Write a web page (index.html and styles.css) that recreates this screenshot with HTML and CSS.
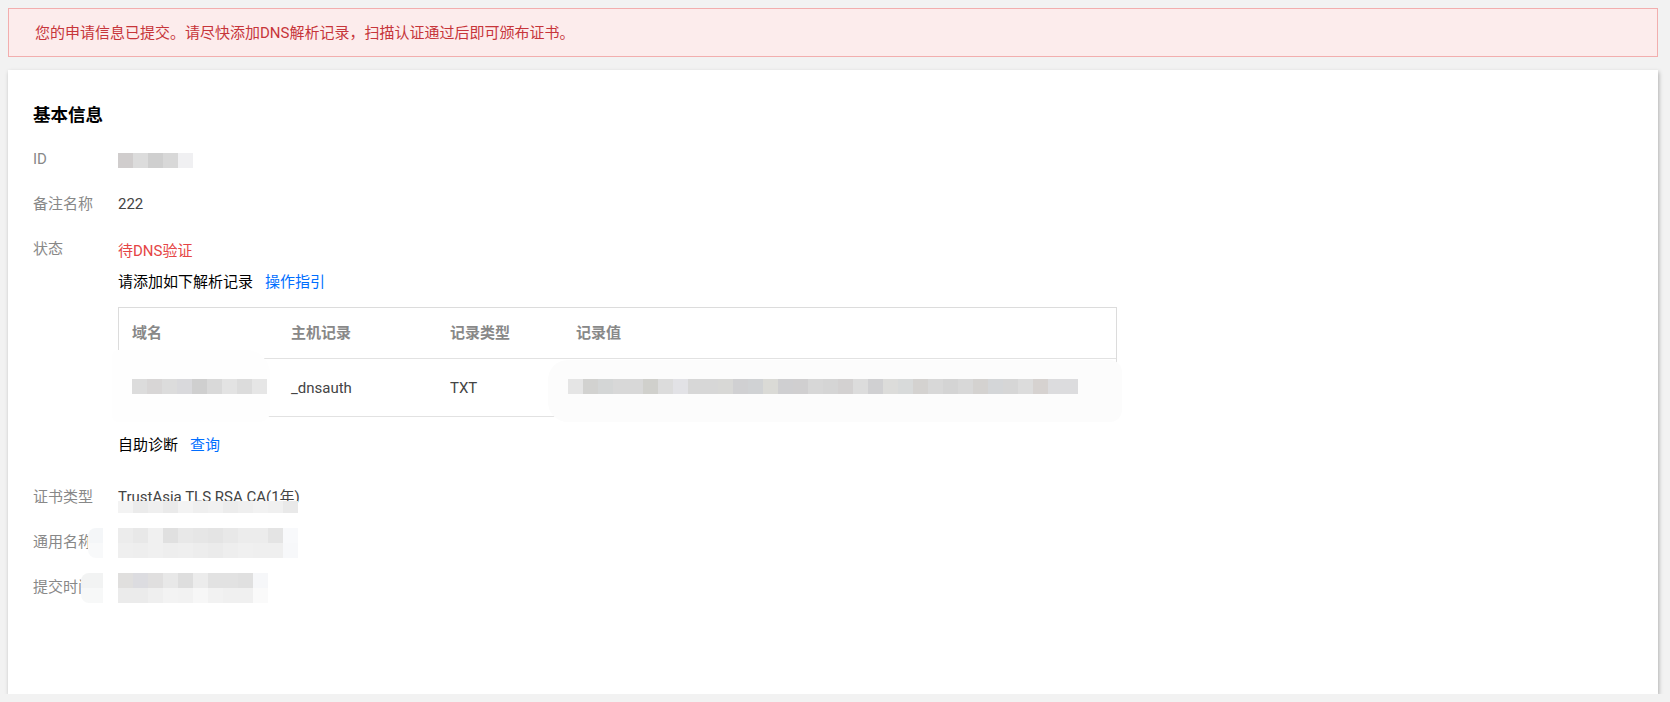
FILE: index.html
```html
<!DOCTYPE html>
<html lang="zh-CN">
<head>
    <meta charset="UTF-8">
    <title>证书详情</title>
    <link rel="stylesheet" href="styles.css">
</head>
<body>
    <div class="page">
        <div class="alert">您的申请信息已提交。请尽快添加DNS解析记录，扫描认证通过后即可颁布证书。</div>

        <div class="card">
            <h3>基本信息</h3>

            <div class="info-row">
                <span class="label">ID</span>
                <div class="value"><span class="mosaic mosaic-id"></span></div>
            </div>

            <div class="info-row">
                <span class="label">备注名称</span>
                <div class="value">222</div>
            </div>

            <div class="info-row status-row">
                <span class="label">状态</span>
                <div class="value">
                    <div class="status">待DNS验证</div>
                    <div class="dns-tip">请添加如下解析记录<a href="#" class="link">操作指引</a></div>

                    <div class="record-table">
                        <table>
                            <colgroup>
                                <col style="width: 159px">
                                <col style="width: 159px">
                                <col style="width: 126px">
                                <col>
                            </colgroup>
                            <thead>
                                <tr>
                                    <th>域名</th>
                                    <th>主机记录</th>
                                    <th>记录类型</th>
                                    <th>记录值</th>
                                </tr>
                            </thead>
                            <tbody>
                                <tr>
                                    <td><span class="mosaic mosaic-domain"></span></td>
                                    <td>_dnsauth</td>
                                    <td>TXT</td>
                                    <td><span class="mosaic mosaic-record"></span></td>
                                </tr>
                            </tbody>
                        </table>
                        <div class="smudge smudge-left"></div>
                        <div class="smudge smudge-right"></div>
                    </div>

                    <div class="diagnose">自助诊断<a href="#" class="link">查询</a></div>
                </div>
            </div>

            <div class="info-row">
                <span class="label">证书类型</span>
                <div class="value cert-type">
                    TrustAsia TLS RSA CA(1年)
                    <span class="mosaic mosaic-cert"></span>
                </div>
            </div>

            <div class="info-row">
                <span class="label">通用名称<span class="smudge smudge-label-a"></span></span>
                <div class="value"><span class="mosaic mosaic-cn"></span></div>
            </div>

            <div class="info-row">
                <span class="label">提交时间<span class="smudge smudge-label-b"></span></span>
                <div class="value"><span class="mosaic mosaic-time"></span></div>
            </div>
        </div>
    </div>
</body>
</html>
```

FILE: styles.css
```css
/* base */
body {
    margin: 0;
    background-color: #f2f2f2;
    font-family: Roboto, "Noto Sans CJK SC", sans-serif;
    font-size: 15px;
    color: #333;
}

.page {
    padding: 8px 12px 0 8px;
}

/* top notice */
.alert {
    border: 1px solid #f2aeae;
    background-color: #fcecec;
    color: #c7353a;
    line-height: 20px;
    padding: 14px 26px 13px;
}

/* card */
.card {
    margin-top: 13px;
    background-color: #fff;
    padding: 33px 25px 97px;
    box-shadow: 1px 2px 4px rgba(0, 0, 0, 0.28);
}
.card h3 {
    margin: 0 0 22px;
    font-size: 17.5px;
    line-height: 24px;
    font-weight: bold;
    color: #000;
}

.info-row {
    display: flex;
    line-height: 20px;
    margin-bottom: 25px;
}
.info-row:last-child {
    margin-bottom: 0;
}
.status-row {
    margin-bottom: 32px;
}
.label {
    position: relative;
    width: 85px;
    flex-shrink: 0;
    color: #888;
}
.value {
    position: relative;
    flex: 1;
    color: #444;
}

.status {
    padding-top: 2px;
    color: #e54545;
}
.dns-tip,
.diagnose {
    color: #000;
}
.dns-tip {
    margin-top: 11px;
}
.diagnose {
    margin-top: 18px;
}
.link {
    margin-left: 12px;
    color: #006eff;
    text-decoration: none;
}

/* dns record table */
.record-table {
    position: relative;
    width: 999px;
    box-sizing: border-box;
    margin-top: 15px;
    border: 1px solid #dcdcdc;
    border-bottom: none;
}
.record-table table {
    width: 100%;
    table-layout: fixed;
    border-collapse: separate;
    border-spacing: 0;
}
.record-table th {
    height: 50px;
    padding: 0 13px;
    text-align: left;
    font-weight: bold;
    color: #888;
    border-bottom: 1px solid #e2e2e2;
}
.record-table td {
    height: 57px;
    padding: 0 13px;
    color: #444;
    white-space: nowrap;
    border-bottom: 1px solid #e2e2e2;
}

/* redacted bits */
.mosaic {
    position: relative;
    z-index: 2;
    display: block;
}
.mosaic-id {
    width: 75px;
    height: 15px;
    margin-top: 4px;
    background: linear-gradient(to right, #d0cdcd 0 15px, #dcdcdc 15px 30px, #cfcfcf 30px 45px, #d8d8d8 45px 60px, #f0f0f2 60px 75px);
}
.mosaic-domain {
    width: 135px;
    height: 15px;
    margin-top: -2px;
    background: linear-gradient(to right, #dcdcdc 0 15px, #d8d6d6 15px 30px, #dcdcdc 30px 45px, #d9d9dc 45px 60px, #cfcfcf 60px 75px, #d9d9d9 75px 90px, #e3e3e3 90px 105px, #dcdcdc 105px 120px, #e6e6e6 120px 135px);
}
.mosaic-record {
    width: 510px;
    height: 15px;
    margin-left: -8px;
    margin-top: -2px;
    background: linear-gradient(to right,
        #e5e5e5 0 15px, #d2d2d0 15px 30px, #d4d6d6 30px 45px, #d8d8d8 45px 75px,
        #d0d0cc 75px 90px, #dcdcdc 90px 105px, #e2e2e6 105px 120px, #d7d7d7 120px 150px,
        #d8d8d6 150px 165px, #d0d0d2 165px 180px, #d0d2d4 180px 195px, #dadad6 195px 210px,
        #cfcfd1 210px 225px, #d0cfd0 225px 240px, #d7d7d7 240px 255px, #d5d5d5 255px 270px,
        #d3d1d1 270px 285px, #dcdcdc 285px 300px, #d0d0d2 300px 315px, #dcdcda 315px 330px,
        #d8dada 330px 345px, #d4d2d0 345px 360px, #d8d8d8 360px 375px, #d4d4d4 375px 390px,
        #d8d8d8 390px 405px, #d4d2d0 405px 420px, #d4d6d8 420px 435px, #d6d6d6 435px 450px,
        #dcdcdc 450px 465px, #d6d2d0 465px 480px, #dcdcde 480px 495px, #dcdcde 495px 510px);
}
.cert-type .mosaic-cert {
    position: absolute;
    left: 0;
    top: 14px;
    width: 180px;
    height: 12px;
    background: linear-gradient(to right,
        #f3f3f3 0 15px, #ebebeb 15px 30px, #efefef 30px 45px, #eaeaea 45px 60px,
        #f3f3f3 60px 75px, #efefef 75px 90px, #f1f1f1 90px 105px, #ececec 105px 120px,
        #efefef 120px 135px, #f2f2f2 135px 150px, #f0f0f0 150px 165px, #e9e9e9 165px 180px);
}
.mosaic-cn {
    width: 180px;
    height: 30px;
    margin: -4px 0 -6px;
    background:
        linear-gradient(to right,
            #ececec 0 15px, #e8e8e8 15px 30px, #f0f0f0 30px 45px, #e0e0e0 45px 60px,
            #e8e8e8 60px 75px, #e6e6e6 75px 90px, #e4e4e4 90px 105px, #e8e8e8 105px 120px,
            #ececec 120px 150px, #e4e4e4 150px 165px, #f8f9fb 165px 180px) top / 100% 15px no-repeat,
        linear-gradient(to right,
            #efefef 0 15px, #eeeeee 15px 30px, #f0f0f0 30px 45px, #eeeeee 45px 60px,
            #efefef 60px 75px, #ededed 75px 90px, #ebebeb 90px 105px, #eeeeee 105px 120px,
            #f0f0f0 120px 135px, #efefef 135px 165px, #f7f8fa 165px 180px) bottom / 100% 15px no-repeat;
}
.mosaic-time {
    width: 150px;
    height: 30px;
    margin: -4px 0 -6px;
    background:
        linear-gradient(to right,
            #e0dfde 0 15px, #dcdce0 15px 30px, #e0dfdf 30px 45px, #e8e8e8 45px 60px,
            #dedede 60px 75px, #ececec 75px 90px, #e2e2e2 90px 120px, #e0e0e0 120px 135px,
            #f6f7f9 135px 150px) top / 100% 15px no-repeat,
        linear-gradient(to right,
            #ebebeb 0 30px, #efefef 30px 45px, #f3f3f3 45px 60px, #f2f2f2 60px 75px,
            #f7f7f7 75px 90px, #f2f2f2 90px 105px, #f0f0f0 105px 135px,
            #fafafa 135px 150px) bottom / 100% 15px no-repeat;
}

.smudge {
    position: absolute;
    z-index: 1;
}
.smudge-left {
    left: -7px;
    top: 42px;
    width: 158px;
    height: 72px;
    background-color: #fefefe;
    border-radius: 6px 24px 10px 6px;
}
.smudge-right {
    left: 429px;
    top: 52px;
    width: 574px;
    height: 62px;
    background-color: #fcfcfc;
    border-radius: 20px 12px 12px 20px;
}
.smudge-label-a {
    left: 55px;
    top: -4px;
    width: 15px;
    height: 30px;
    background: linear-gradient(#f4f6f8 0 15px, #f8f9fa 15px 30px);
    border-radius: 8px 0 0 8px;
}
.smudge-label-b {
    left: 48px;
    top: -4px;
    width: 22px;
    height: 30px;
    background: linear-gradient(#f2f3f3 0 15px, #f7f8f8 15px 30px);
    border-radius: 8px 0 0 8px;
}
```
